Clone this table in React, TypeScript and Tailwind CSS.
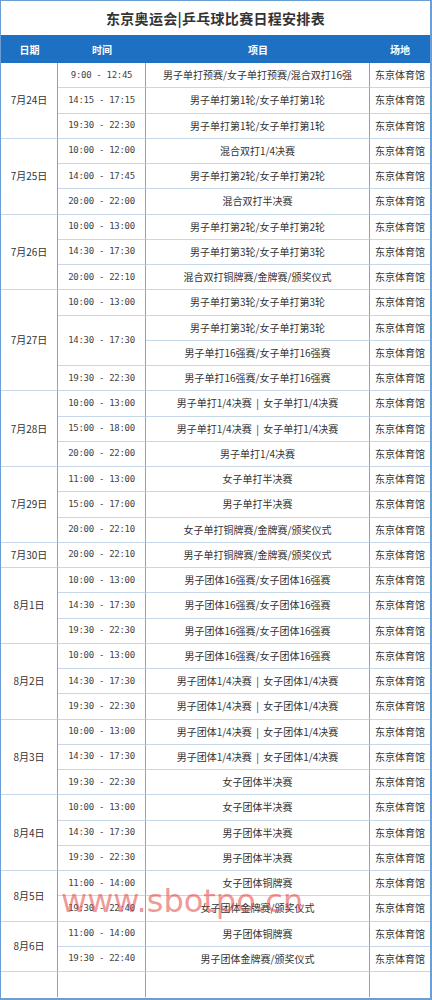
import React from "react";

type Slot = { time: string; items: string[] };
type Group = { date: string; slots: Slot[] };

const groups: Group[] = [
  {
    date: "7月24日",
    slots: [
      { time: "9:00 - 12:45", items: ["男子单打预赛/女子单打预赛/混合双打16强"] },
      { time: "14:15 - 17:15", items: ["男子单打第1轮/女子单打第1轮"] },
      { time: "19:30 - 22:30", items: ["男子单打第1轮/女子单打第1轮"] },
    ],
  },
  {
    date: "7月25日",
    slots: [
      { time: "10:00 - 12:00", items: ["混合双打1/4决赛"] },
      { time: "14:00 - 17:45", items: ["男子单打第2轮/女子单打第2轮"] },
      { time: "20:00 - 22:00", items: ["混合双打半决赛"] },
    ],
  },
  {
    date: "7月26日",
    slots: [
      { time: "10:00 - 13:00", items: ["男子单打第2轮/女子单打第2轮"] },
      { time: "14:30 - 17:30", items: ["男子单打第3轮/女子单打第3轮"] },
      { time: "20:00 - 22:10", items: ["混合双打铜牌赛/金牌赛/颁奖仪式"] },
    ],
  },
  {
    date: "7月27日",
    slots: [
      { time: "10:00 - 13:00", items: ["男子单打第3轮/女子单打第3轮"] },
      { time: "14:30 - 17:30", items: ["男子单打第3轮/女子单打第3轮", "男子单打16强赛/女子单打16强赛"] },
      { time: "19:30 - 22:30", items: ["男子单打16强赛/女子单打16强赛"] },
    ],
  },
  {
    date: "7月28日",
    slots: [
      { time: "10:00 - 13:00", items: ["男子单打1/4决赛 | 女子单打1/4决赛"] },
      { time: "15:00 - 18:00", items: ["男子单打1/4决赛 | 女子单打1/4决赛"] },
      { time: "20:00 - 22:00", items: ["男子单打1/4决赛"] },
    ],
  },
  {
    date: "7月29日",
    slots: [
      { time: "11:00 - 13:00", items: ["女子单打半决赛"] },
      { time: "15:00 - 17:00", items: ["男子单打半决赛"] },
      { time: "20:00 - 22:10", items: ["女子单打铜牌赛/金牌赛/颁奖仪式"] },
    ],
  },
  {
    date: "7月30日",
    slots: [{ time: "20:00 - 22:10", items: ["男子单打铜牌赛/金牌赛/颁奖仪式"] }],
  },
  {
    date: "8月1日",
    slots: [
      { time: "10:00 - 13:00", items: ["男子团体16强赛/女子团体16强赛"] },
      { time: "14:30 - 17:30", items: ["男子团体16强赛/女子团体16强赛"] },
      { time: "19:30 - 22:30", items: ["男子团体16强赛/女子团体16强赛"] },
    ],
  },
  {
    date: "8月2日",
    slots: [
      { time: "10:00 - 13:00", items: ["男子团体16强赛/女子团体16强赛"] },
      { time: "14:30 - 17:30", items: ["男子团体1/4决赛 | 女子团体1/4决赛"] },
      { time: "19:30 - 22:30", items: ["男子团体1/4决赛 | 女子团体1/4决赛"] },
    ],
  },
  {
    date: "8月3日",
    slots: [
      { time: "10:00 - 13:00", items: ["男子团体1/4决赛 | 女子团体1/4决赛"] },
      { time: "14:30 - 17:30", items: ["男子团体1/4决赛 | 女子团体1/4决赛"] },
      { time: "19:30 - 22:30", items: ["女子团体半决赛"] },
    ],
  },
  {
    date: "8月4日",
    slots: [
      { time: "10:00 - 13:00", items: ["女子团体半决赛"] },
      { time: "14:30 - 17:30", items: ["男子团体半决赛"] },
      { time: "19:30 - 22:30", items: ["男子团体半决赛"] },
    ],
  },
  {
    date: "8月5日",
    slots: [
      { time: "11:00 - 14:00", items: ["女子团体铜牌赛"] },
      { time: "19:30 - 22:40", items: ["女子团体金牌赛/颁奖仪式"] },
    ],
  },
  {
    date: "8月6日",
    slots: [
      { time: "11:00 - 14:00", items: ["男子团体铜牌赛"] },
      { time: "19:30 - 22:40", items: ["男子团体金牌赛/颁奖仪式"] },
    ],
  },
];

const cellBase =
  "flex items-center justify-center border-r border-b border-r-[#7ea5d0] border-b-[#c6d7ea] leading-none";
const cjkText = "text-[10px] text-[#333] font-['Noto_Sans_CJK_SC','Noto_Sans',sans-serif]";
const timeText = "text-[9px] tracking-[-0.3px] text-[#444] font-['DejaVu_Sans_Mono','Liberation_Mono',monospace]";
const groupEnd = "border-b-[#a9c3e0]";

export default function App() {
  const cells: React.ReactNode[] = [];
  let row = 1;
  groups.forEach((g, gi) => {
    const total = g.slots.reduce((s, sl) => s + sl.items.length, 0);
    cells.push(
      <div key={`d${gi}`} className={`${cellBase} ${cjkText} col-start-1 ${groupEnd}`} style={{ gridRow: `${row} / span ${total}` }}>
        {g.date}
      </div>
    );
    g.slots.forEach((sl, si) => {
      const lastSlot = si === g.slots.length - 1;
      cells.push(
        <div
          key={`t${gi}-${si}`}
          className={`${cellBase} ${timeText} col-start-2 ${lastSlot ? groupEnd : ""}`}
          style={{ gridRow: `${row} / span ${sl.items.length}` }}
        >
          {sl.time}
        </div>
      );
      sl.items.forEach((it, ii) => {
        const last = lastSlot && ii === sl.items.length - 1;
        cells.push(
          <div
            key={`p${gi}-${si}-${ii}`}
            className={`${cellBase} ${cjkText} col-start-3 whitespace-pre ${last ? groupEnd : ""}`}
            style={{ gridRow: `${row + ii} / span 1` }}
          >
            {it.replace(" | ", "  |  ")}
          </div>
        );
        cells.push(
          <div
            key={`v${gi}-${si}-${ii}`}
            className={`${cellBase} ${cjkText} col-start-4 border-r-0 ${last ? groupEnd : ""}`}
            style={{ gridRow: `${row + ii} / span 1` }}
          >
            东京体育馆
          </div>
        );
      });
      row += sl.items.length;
    });
  });

  return (
    <div className="w-[432px] bg-white">
      <div className="relative w-[432px] h-[1000px] border border-[#6a9fd6] border-b-2 border-r-2 flex flex-col bg-white">
        <div className="h-[34px] flex items-center justify-center text-[14px] font-bold text-[#333] tracking-[0.3px] font-['Noto_Sans_CJK_SC','Noto_Sans',sans-serif]">
          东京奥运会|乒乓球比赛日程安排表
        </div>
        <div className="h-[28px] bg-[#1d70c2] grid grid-cols-[57px_88px_224px_1fr] text-white text-[10px] font-bold font-['Noto_Sans_CJK_SC','Noto_Sans',sans-serif]">
          <div className="flex items-center justify-center">日期</div>
          <div className="flex items-center justify-center">时间</div>
          <div className="flex items-center justify-center">项目</div>
          <div className="flex items-center justify-center">场地</div>
        </div>
        <div className="grid grid-cols-[57px_88px_224px_1fr] auto-rows-[25.25px] flex-1">
          {cells}
          <div className={`${cellBase} col-start-1 border-b-0`} />
          <div className={`${cellBase} col-start-2 border-b-0`} />
          <div className={`${cellBase} col-start-3 border-b-0`} />
          <div className={`${cellBase} col-start-4 border-r-0 border-b-0`} />
        </div>
        <div className="absolute left-[60px] top-[884px] text-[32px] leading-none text-[rgba(226,64,64,0.55)] pointer-events-none whitespace-nowrap font-['DejaVu_Sans',sans-serif]">
          www.sbotpo.cn
        </div>
      </div>
    </div>
  );
}
